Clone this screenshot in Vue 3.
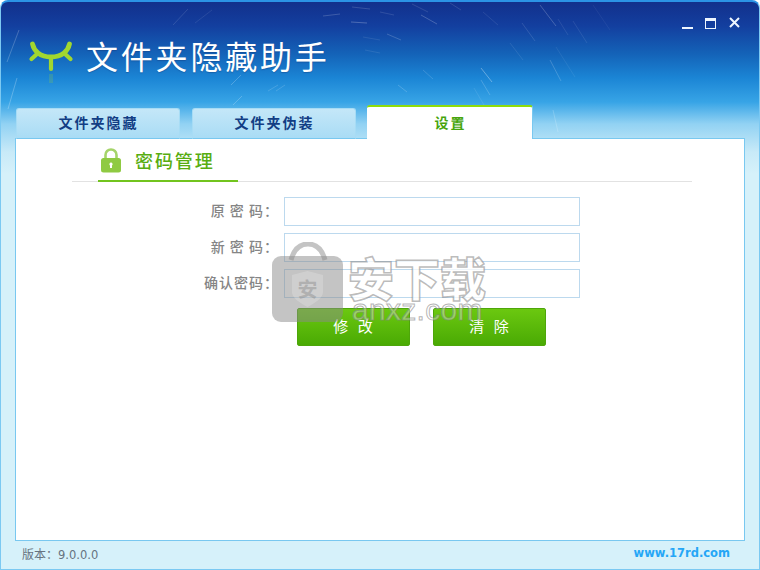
<script setup>
const streaks = [
  [7,62,19,30,.35],[8,109,17,78,.4],[173,25,188,9,.2],[195,23,212,10,.15],[231,85,241,75,.35],[233,105,242,96,.35],
  [268,91,278,85,.25],[276,91,285,85,.25],[323,16,340,14,.3],[351,22,367,23,.4],[352,7,370,9,.25],[365,50,380,53,.15],[363,37,380,40,.15],
  [540,5,556,26,.35],[421,15,437,24,.35],[412,4,428,12,.2],[387,34,401,40,.3],[380,12,394,15,.2],[481,68,492,82,.55],[481,80,490,95,.3],
  [550,60,561,81,.3],[553,110,558,132,.3],[423,70,433,79,.25],[398,85,407,92,.3],[522,23,535,41,.2],[510,43,523,60,.15],[558,19,568,35,.15],
  [573,21,587,43,.15],[450,3,461,10,.2],[483,12,498,25,.15],[556,47,575,77,.12],[474,88,484,105,.15],[593,5,610,30,.1]
]
const tabs = [
  { label: '文件夹隐藏', active: false },
  { label: '文件夹伪装', active: false },
  { label: '设置', active: true }
]
const colon = '\uFF1A'
const fields = ['原 密 码' + colon, '新 密 码' + colon, '确认密码' + colon]
const buttons = ['修  改', '清  除']
</script>

<template>
  <div class="window">
    <svg class="streaks" width="760" height="140" viewBox="0 0 760 140">
      <line v-for="(s, i) in streaks" :key="i" :x1="s[0]" :y1="s[1]" :x2="s[2]" :y2="s[3]" stroke="#fff" stroke-width="1" :stroke-opacity="s[4] * 0.6" />
    </svg>

    <header class="header">
      <div class="brand">
        <svg class="logo" width="46" height="42" viewBox="0 0 46 42">
          <path d="M4.500 3 C6 10 12 16 23 16 C34 16 40 10 41.500 3" fill="none" stroke="#a2d72f" stroke-width="4.800" stroke-linecap="round" />
          <path d="M23 17 V28 M9 13 L3.500 18 M37 13 L42.500 18" fill="none" stroke="#a2d72f" stroke-width="4.200" stroke-linecap="round" />
          <path d="M23 33 V42" stroke="#a2d72f" stroke-opacity=".2" stroke-width="4" />
        </svg>
        <h1 class="title">文件夹隐藏助手</h1>
      </div>
      <div class="controls">
        <svg width="58" height="14" viewBox="0 0 58 14">
          <rect x="0" y="10" width="11" height="2" fill="#eef6ff" />
          <rect x="23.500" y="1.500" width="10" height="10" fill="none" stroke="#eef6ff" />
          <rect x="23" y="1" width="11" height="3" fill="#eef6ff" />
          <path d="M48 1 L57 10 M57 1 L48 10" stroke="#eef6ff" stroke-width="2" />
        </svg>
      </div>
    </header>

    <nav class="tabs">
      <div v-for="t in tabs" :key="t.label" class="tab" :class="{ active: t.active }">{{ t.label }}</div>
    </nav>

    <main class="panel">
      <div class="section">
        <div class="section-tab">
          <svg width="22" height="25" viewBox="0 0 22 25">
            <path d="M5.500 11 V7 C5.500 3.500 8 1.500 11 1.500 C14 1.500 16.500 3.500 16.500 7 V11" fill="none" stroke="#a5d46a" stroke-width="2.600" />
            <rect x="1" y="10" width="20" height="14.500" rx="2.500" fill="#8fca42" />
            <path d="M11 14.500 a1.700 1.700 0 0 1 1 3 V20 h-2 v-2.500 a1.700 1.700 0 0 1 1-3z" fill="#fff" />
          </svg>
          <span class="section-title">密码管理</span>
        </div>
      </div>

      <form class="form" @submit.prevent>
        <label v-for="f in fields" :key="f" class="row">
          <span class="label">{{ f }}</span>
          <input class="input" type="password" />
        </label>
        <div class="actions">
          <button v-for="b in buttons" :key="b" class="btn" type="button">{{ b }}</button>
        </div>
      </form>

      <div class="watermark">
        <svg width="72" height="81" viewBox="0 0 72 81">
          <path d="M19 18 C22 7 28 2 36 2 C44 2 50 7 53 18" fill="none" stroke="#8a8a8a" stroke-opacity=".5" stroke-width="5" />
          <rect x="0" y="14" width="71" height="66" rx="9" fill="#8a8a8a" fill-opacity=".5" />
          <path d="M35.500 29 L51 33 V50 C51 56 43 61 35.500 65 C28 61 20 56 20 50 V33 Z" fill="#fff" fill-opacity=".2" />
          <text x="35.500" y="55" text-anchor="middle" font-size="20" font-weight="700" fill="#8a8a8a" fill-opacity=".45">安</text>
        </svg>
        <div class="wm-text">
          <div class="wm-cn">安下载</div>
          <div class="wm-en">anxz.com</div>
        </div>
      </div>
    </main>

    <footer class="footer">
      <span class="version">版本{{ colon }}<span class="num">9.0.0.0</span></span>
      <span class="site">www.17rd.com</span>
    </footer>
  </div>
</template>

<style>
html, body { margin: 0; background: #fff; }
</style>

<style scoped>
.window {
  position: relative;
  box-sizing: border-box;
  width: 760px;
  height: 570px;
  display: flex;
  flex-direction: column;
  overflow: hidden;
  border: 1px solid #7cc9f2;
  border-top: 2px solid #2b93e6;
  border-radius: 8px 8px 0 0;
  font-family: "Noto Sans CJK SC", "Liberation Sans", sans-serif;
  background: linear-gradient(to bottom, #12308c 0, #133f9f 24px, #1463b8 52px, #1b85d5 76px, #37a4e6 100px, #92d2f3 122px, #c8eaf8 150px, #d6f1fa 172px);
}
.streaks { position: absolute; left: -1px; top: -2px; pointer-events: none; }
.header {
  position: relative;
  height: 103px;
  flex: none;
  display: flex;
  justify-content: space-between;
  align-items: flex-start;
}
.brand { display: flex; align-items: flex-start; margin: 33px 0 0 27px; gap: 12px; }
.logo { margin-top: 6px; }
.title {
  margin: 0;
  font-size: 32px;
  font-weight: 400;
  letter-spacing: 2.800px;
  line-height: 40px;
  color: #fff;
  text-shadow: 0 1px 1px rgba(20, 50, 110, .35);
}
.controls { margin: 15px 19px 0 0; line-height: 0; }
.tabs {
  position: relative;
  z-index: 1;
  height: 34px;
  flex: none;
  display: flex;
  align-items: flex-end;
  padding-left: 15px;
  margin-bottom: -1px;
}
.tab {
  box-sizing: border-box;
  width: 164px;
  height: 31px;
  margin-right: 12px;
  padding-left: 1px;
  border: 1px solid #a7dcf5;
  border-bottom: 1px solid #79c8f0;
  border-radius: 3px 3px 0 0;
  background: linear-gradient(to bottom, #c4e7f8, #a9dcf5);
  color: #123d84;
  font-size: 14px;
  font-weight: 700;
  letter-spacing: 2px;
  line-height: 27px;
  text-align: center;
}
.tab:nth-child(2) { margin-right: 11px; }
.tab.active {
  width: 166px;
  height: 34px;
  padding-left: 2px;
  border: 0;
  border-top: 2px solid #8fdc0a;
  border-right: 1px solid #79c8f0;
  background: #fff;
  color: #46a50c;
  line-height: 31px;
}
.panel {
  position: relative;
  box-sizing: border-box;
  height: 403px;
  flex: none;
  margin: 0 14px;
  background: #fff;
  border: 1px solid #79c8f0;
}
.section {
  margin: 0 52px 0 56px;
  height: 42px;
  border-bottom: 1px solid #e2e2e2;
}
.section-tab {
  box-sizing: border-box;
  width: 140px;
  height: 43px;
  margin-left: 26px;
  padding: 9px 0 0 2px;
  display: flex;
  align-items: flex-start;
  gap: 13px;
  border-bottom: 2px solid #72c41e;
}
.section-title {
  font-size: 18px;
  letter-spacing: 1.900px;
  line-height: 25px;
  color: #58ad10;
  font-weight: 500;
}
.form {
  margin-top: 15px;
  display: flex;
  flex-direction: column;
  gap: 7px;
}
.row { display: flex; align-items: center; height: 29px; }
.label {
  box-sizing: border-box;
  width: 268px;
  padding: 0 5px 3px 0;
  text-align: right;
  font-size: 14px;
  font-weight: 500;
  letter-spacing: 1px;
  color: #858585;
  white-space: pre;
}
.input {
  box-sizing: border-box;
  width: 296px;
  height: 29px;
  margin: 0;
  padding: 0 4px;
  border: 1px solid #bcd9ee;
  border-radius: 0;
  background: #fff;
  outline: none;
}
.actions {
  display: flex;
  gap: 23px;
  margin: 3px 0 0 281px;
}
.btn {
  width: 113px;
  height: 38px;
  padding: 0 0 3px;
  border: 1px solid #4ea60a;
  border-radius: 2px;
  background: linear-gradient(to bottom, #6bc810, #4aaa04);
  color: #fff;
  font-family: inherit;
  font-size: 15px;
  letter-spacing: 1px;
  white-space: pre;
}
.watermark {
  position: absolute;
  left: 256px;
  top: 103px;
  display: flex;
  align-items: flex-start;
  gap: 5px;
  pointer-events: none;
}
.wm-text { margin-top: 8px; margin-left: -1px; }
.wm-cn {
  font-size: 46px;
  line-height: 52px;
  font-weight: 900;
  color: rgba(255, 255, 255, .75);
  -webkit-text-stroke: 1.500px rgba(130, 130, 130, .55);
}
.wm-en {
  margin: -5px 0 0 4px;
  font-family: "Liberation Sans", sans-serif;
  font-size: 30px;
  line-height: 26px;
  letter-spacing: .3px;
  color: rgba(255, 255, 255, .35);
  -webkit-text-stroke: 1px rgba(130, 130, 130, .6);
}
.footer {
  flex: 1;
  display: flex;
  justify-content: space-between;
  align-items: center;
  padding: 0 29px 4px 21px;
  font-size: 12px;
}
.version { color: #667380; }
.num { font-family: "DejaVu Sans", sans-serif; font-size: 11.500px; }
.site {
  font-family: "DejaVu Sans", sans-serif;
  font-weight: 700;
  font-size: 11.500px;
  color: #25a6f6;
}
</style>
